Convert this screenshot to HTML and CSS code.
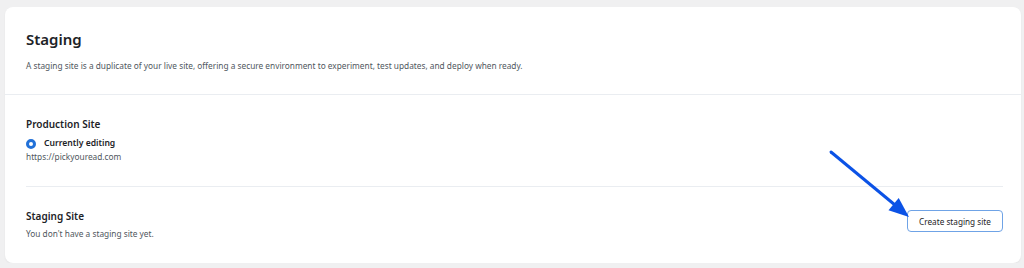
FILE: index.html
```html
<!DOCTYPE html>
<html lang="en">
<head>
    <meta charset="UTF-8">
    <title>Staging</title>
    <link rel="stylesheet" href="styles.css">
</head>
<body>

<div class="card">
    <!-- Header -->
    <div class="card-header">
        <h1>Staging</h1>
        <p class="intro">A staging site is a duplicate of your live site, offering a secure environment to experiment, test updates, and deploy when ready.</p>
    </div>

    <div class="card-body">
        <!-- Production -->
        <div class="site-block production">
            <h2>Production Site</h2>
            <div class="current">
                <span class="radio"></span>
                <span>Currently editing</span>
            </div>
            <div class="muted">https://pickyouread.com</div>
        </div>

        <!-- Staging -->
        <div class="site-block staging">
            <div>
                <h2>Staging Site</h2>
                <div class="muted">You don't have a staging site yet.</div>
            </div>
            <button class="create-btn">Create staging site</button>
        </div>
    </div>

    <svg class="arrow" width="95" height="85" viewBox="0 0 95 85">
        <line x1="10" y1="11" x2="74" y2="64" stroke="#0b52e6" stroke-width="3" stroke-linecap="round"/>
        <polygon points="88,76 67.5,69.3 77.7,57.1" fill="#0b52e6"/>
    </svg>
</div>

</body>
</html>
```

FILE: styles.css
```css
/* Page */
body {
    margin: 0;
    background: #f0f0f1;
    font-family: 'Noto Sans', sans-serif;
    color: #1d2327;
}

/* Main card */
.card {
    position: relative;
    margin: 7px 3px 0 5px;
    height: 256px;
    background: #fff;
    border-radius: 8px;
    box-shadow: 0 1px 2px rgba(0, 0, 0, 0.05);
}

.card-header {
    box-sizing: border-box;
    padding: 22px 21px 0 21px;
    height: 88px;
    border-bottom: 1px solid #eaedf1;
}

.card-header h1 {
    margin: 0;
    font-size: 15px;
    font-weight: 600;
    line-height: 20px;
}

.card-header .intro {
    margin: 10px 0 0 0;
    font-size: 8.3px;
    line-height: 14px;
    color: #50575e;
}

.card-body {
    padding: 0 18px 0 21px;
}

.site-block h2 {
    margin: 0;
    font-size: 10px;
    font-weight: 600;
    line-height: 17px;
}

.production {
    padding: 21px 0 22px 0;
    border-bottom: 1px solid #eaedf1;
}

.current {
    display: flex;
    align-items: center;
    gap: 8px;
    margin-top: 3px;
    font-size: 8.6px;
    font-weight: 600;
    line-height: 15px;
}

.radio {
    width: 4px;
    height: 4px;
    border: 3.5px solid #2271d8;
    border-radius: 50%;
    background: #fff;
}

.muted {
    font-size: 8.3px;
    line-height: 14px;
    color: #50575e;
}

.production .muted {
    margin-top: -1px;
}

.staging {
    display: flex;
    justify-content: space-between;
    align-items: flex-start;
    padding-top: 21px;
}

.staging h2 {
    margin-bottom: 2px;
}

.create-btn {
    margin-top: 2px;
    width: 96px;
    height: 22px;
    padding: 0;
    font-family: inherit;
    font-size: 8.2px;
    color: #1d2327;
    background: #fff;
    border: 1px solid #6fa3e6;
    border-radius: 4px;
    cursor: pointer;
}

/* Annotation arrow */
.arrow {
    position: absolute;
    left: 816px;
    top: 134px;
}
```
